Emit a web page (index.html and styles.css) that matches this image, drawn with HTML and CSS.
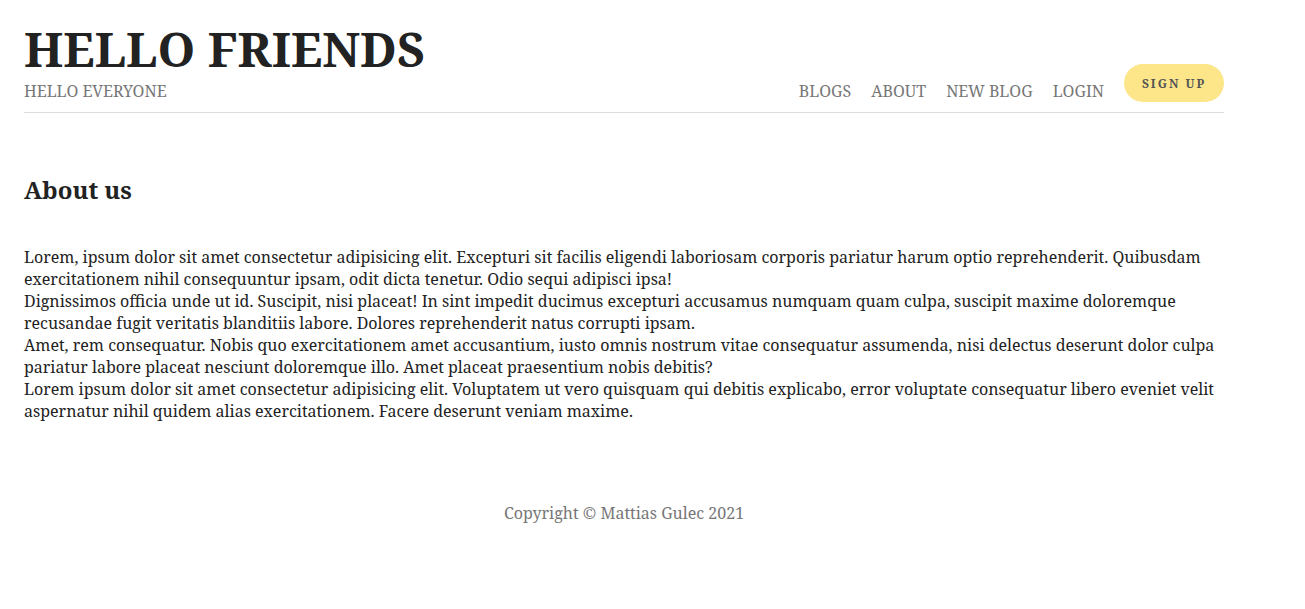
FILE: index.html
```html
<!DOCTYPE html>
<html lang="en">
<head>
<meta charset="utf-8">
<title>Hello Friends</title>
<link rel="stylesheet" href="styles.css">
</head>
<body>
<div class="page">
  <header class="header">
    <div class="brand">
      <h1 class="title">HELLO FRIENDS</h1>
      <p class="subtitle">HELLO EVERYONE</p>
    </div>
    <nav class="nav">
      <a class="nav-link" href="#">BLOGS</a>
      <a class="nav-link" href="#">ABOUT</a>
      <a class="nav-link" href="#">NEW BLOG</a>
      <a class="nav-link" href="#">LOGIN</a>
      <a class="signup" href="#">SIGN UP</a>
    </nav>
  </header>
  <main class="main">
    <h2 class="heading">About us</h2>
    <p class="text">Lorem, ipsum dolor sit amet consectetur adipisicing elit. Excepturi sit facilis eligendi laboriosam corporis pariatur harum optio reprehenderit. Quibusdam exercitationem nihil consequuntur ipsam, odit dicta tenetur. Odio sequi adipisci ipsa!<br>Dignissimos officia unde ut id. Suscipit, nisi placeat! In sint impedit ducimus excepturi accusamus numquam quam culpa, suscipit maxime doloremque recusandae fugit veritatis blanditiis labore. Dolores reprehenderit natus corrupti ipsam.<br>Amet, rem consequatur. Nobis quo exercitationem amet accusantium, iusto omnis nostrum vitae consequatur assumenda, nisi delectus deserunt dolor culpa pariatur labore placeat nesciunt doloremque illo. Amet placeat praesentium nobis debitis?<br>Lorem ipsum dolor sit amet consectetur adipisicing elit. Voluptatem ut vero quisquam qui debitis explicabo, error voluptate consequatur libero eveniet velit aspernatur nihil quidem alias exercitationem. Facere deserunt veniam maxime.</p>
  </main>
  <footer class="footer">Copyright © Mattias Gulec 2021</footer>
</div>
</body>
</html>
```
FILE: styles.css
```css
* { box-sizing: border-box; }
html, body { margin: 0; padding: 0; background: #fff; }
body {
  font-family: "Noto Serif", "DejaVu Serif", "Liberation Serif", serif;
  color: #222;
}
.page {
  width: 1200px;
  margin-left: 24px;
}
.header {
  display: flex;
  justify-content: space-between;
  align-items: flex-end;
  border-bottom: 1px solid #ddd;
  padding-top: 21px;
  padding-bottom: 10px;
}
.title {
  margin: 0;
  font-size: 48px;
  font-weight: 700;
  line-height: 56px;
  color: #222;
}
.subtitle {
  margin: 3px 0 0;
  font-size: 16px;
  line-height: 22px;
  color: #777;
}
.nav {
  display: flex;
  align-items: flex-end;
  gap: 20px;
}
.nav-link {
  font-size: 16px;
  line-height: 22px;
  color: #777;
  text-decoration: none;
}
.signup {
  display: flex;
  align-items: center;
  justify-content: center;
  width: 100px;
  height: 38px;
  border-radius: 19px;
  background: #fde68a;
  color: #555;
  font-size: 12px;
  font-weight: 700;
  letter-spacing: 2px;
  text-decoration: none;
}
.main {
  padding-top: 61px;
}
.heading {
  margin: 0;
  font-size: 24px;
  line-height: 32px;
  font-weight: 700;
}
.text {
  margin: 40px 0 0;
  font-size: 16px;
  line-height: 22px;
}
.footer {
  margin-top: 80px;
  text-align: center;
  font-size: 16px;
  line-height: 22px;
  color: #777;
}
```
